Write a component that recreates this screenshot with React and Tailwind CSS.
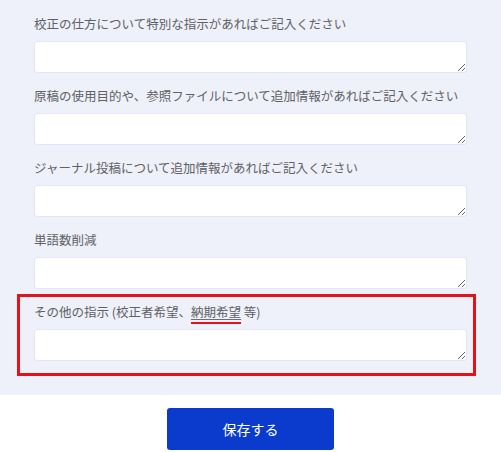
import React from "react";

const labels = [
  "校正の仕方について特別な指示があればご記入ください",
  "原稿の使用目的や、参照ファイルについて追加情報があればご記入ください",
  "ジャーナル投稿について追加情報があればご記入ください",
  "単語数削減",
];

function Field({ label }) {
  return (
    <div className="flex flex-col">
      <div className="h-[18px] leading-[18px] text-[12.5px] text-[#5f6166] mb-2 whitespace-nowrap">{label}</div>
      <textarea className="block w-full h-[32px] min-h-[32px] bg-white border border-[#e1e5f5] rounded-[3px] outline-none" />
    </div>
  );
}

export default function App() {
  return (
    <div className="w-[501px] h-[452px] overflow-hidden bg-white" style={{ fontFamily: '"Noto Sans CJK JP", "Noto Sans", sans-serif' }}>
      <div className="bg-[#eef0fa] px-[34px] pt-[15px] pb-[19px]">
        <div className="flex flex-col gap-[14px]">
          {labels.map((l) => (
            <Field key={l} label={l} />
          ))}
          <div className="-mt-[9px] ml-[-17px] mr-[-9px] border-[3px] border-[#e3121b] pl-[14px] pr-[6px] pt-[6px] pb-[12px]">
            <div className="flex flex-col">
              <div className="h-[18px] leading-[18px] text-[12.5px] text-[#5f6166] mb-2 whitespace-nowrap">
                その他の指示 (校正者希望、
                <span className="underline decoration-[#6b6d72] underline-offset-2 border-b-2 border-[#e3121b] pb-[1px]">納期希望</span>
                {" "}等)
              </div>
              <textarea className="block w-full h-[32px] min-h-[32px] bg-white border border-[#e1e5f5] rounded-[3px] outline-none" />
            </div>
          </div>
        </div>
      </div>
      <div className="flex justify-center pt-[13px]">
        <button className="w-[167px] h-[42px] rounded-[3px] bg-[#0b3bcd] text-white text-[14px]">保存する</button>
      </div>
    </div>
  );
}
